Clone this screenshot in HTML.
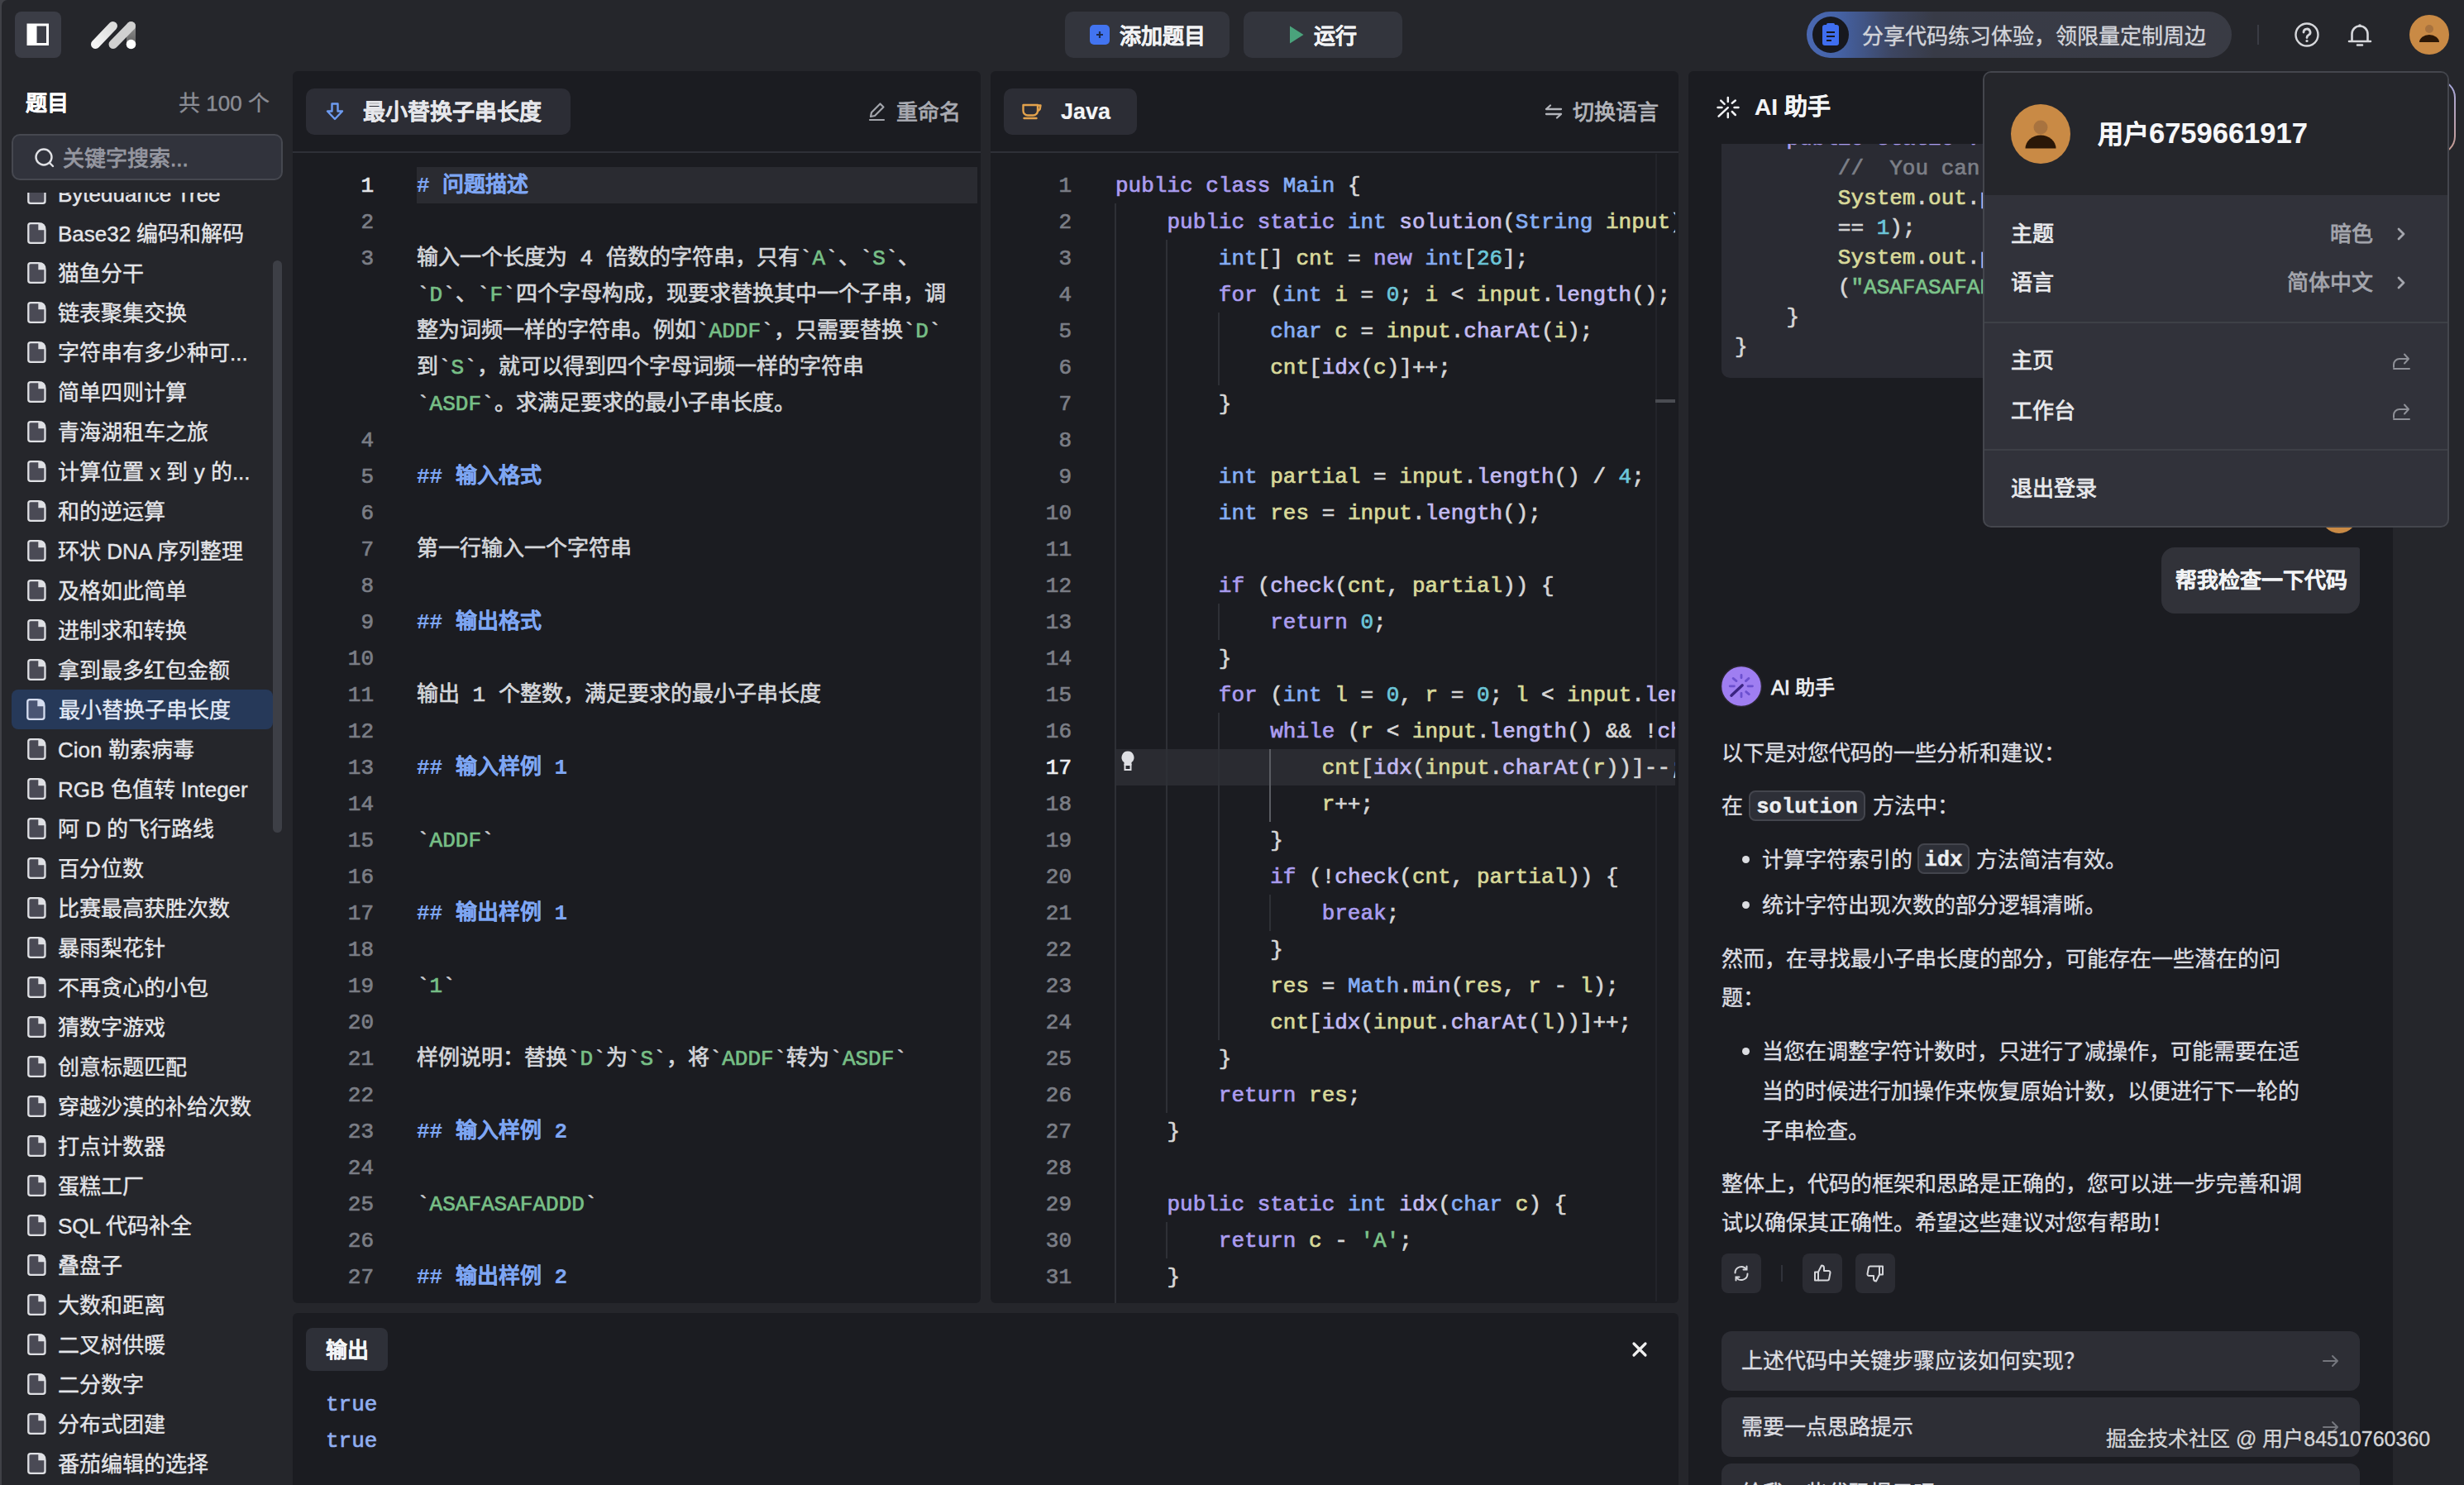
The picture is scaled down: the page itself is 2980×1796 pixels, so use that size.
<!DOCTYPE html>
<html lang="zh-CN">
<head>
<meta charset="utf-8">
<style>
*{box-sizing:border-box;margin:0;padding:0}
html,body{width:2980px;height:1796px;overflow:hidden;background:#25262b}
body{font-family:"Liberation Sans",sans-serif;color:#e2e3e7;position:relative;-webkit-text-stroke:0.4px currentColor}
.abs{position:absolute}
[style*="font-weight:bold"]{-webkit-text-stroke:0.15px currentColor}
.med{-webkit-text-stroke:0.8px currentColor !important;font-weight:normal !important}
.mono{font-family:"Liberation Mono",monospace}
.btn{position:absolute;background:#33353d;border-radius:10px}
.panel{position:absolute;background:#1b1c21;border-radius:6px;overflow:hidden}
/* sidebar */
#list{position:absolute;left:0;top:233px;width:330px;height:1563px;overflow:hidden}
#list .inner{position:absolute;left:0;top:-23px;width:330px}
.it{position:relative;height:48px;font-size:26px;line-height:50px;color:#e4e5e9;padding-left:70px;white-space:nowrap}
.it svg{position:absolute;left:33px;top:10px}
.it.sel{color:#e2e9f6;background:#263959;border-radius:8px;margin:0 0 0 14px;padding-left:57px;width:316px}
.it.sel svg{left:18px}
.it.sel svg path:first-child{fill:#4a5573;stroke:#d5ddf0}.it.sel svg path:last-child{fill:#d5ddf0}
/* editor */
.hdr{position:absolute;left:0;top:0;width:100%;height:99px;border-bottom:2px solid #2e3037}
.tab{position:absolute;top:21px;height:56px;background:#2c2d35;border-radius:10px}
.ln{position:absolute;width:100%;height:44px;line-height:46px;font-size:26px;white-space:pre;-webkit-text-stroke:0.7px currentColor}
.num{position:absolute;text-align:right;font-family:"Liberation Mono",monospace;color:#7b7e86}
.md{font-family:"Liberation Mono",monospace;color:#d4d6da}
.cj{font-family:"Liberation Sans",sans-serif}
.h{color:#7ea6f3;font-weight:bold;-webkit-text-stroke:0.1px currentColor}
.g{color:#77bf86}
.bt{color:#c9cacd}
/* code colors */
.k{color:#ab9df0}
.t{color:#86aef5}
.v{color:#d8d99a}
.f{color:#c3baf2}
.n{color:#6cc6d9}
.p{color:#d6d6d6}
.s{color:#7cc38a}
.cm{color:#7c7f87}

.aitx{position:absolute;left:40px;font-size:26px;line-height:48px;color:#dcdde1;white-space:nowrap}
.chip{position:absolute;height:37px;background:#2d2f37;border:2px solid #43454d;border-radius:8px;font-family:"Liberation Mono",monospace;font-weight:bold;font-size:25.5px;line-height:37px;text-align:center;color:#eceef1}
.dot{position:absolute;left:65px;width:9px;height:9px;border-radius:5px;background:#dcdde1;margin-top:22px}
.abtn{position:absolute;width:48px;height:48px;background:#2b2c33;border-radius:8px}
.sug{position:absolute;left:40px;width:772px;height:72px;background:#2d2e35;border-radius:12px;font-size:26px;line-height:72px;padding-left:24px;color:#dcdde1;white-space:nowrap}
.dd{position:absolute;font-size:26px;line-height:42px;white-space:nowrap}
</style>
</head>
<body>
<!-- left window border -->
<div class="abs" style="left:0;top:0;width:2px;height:1796px;background:#404147"></div>
<div class="abs" style="left:0;top:0;width:10px;height:10px;background:#404147"></div>
<div class="abs" style="left:2px;top:0;width:10px;height:12px;background:#25262b;border-top-left-radius:7px"></div>

<!-- ===== TOP BAR ===== -->
<div class="btn" style="left:18px;top:14px;width:56px;height:56px;background:#3b3d46;border-radius:8px"></div>
<svg class="abs" style="left:32px;top:28px" width="28" height="28" viewBox="0 0 28 28">
  <rect x="2" y="2" width="23.5" height="23.5" fill="none" stroke="#fff" stroke-width="3" stroke-linejoin="miter"/>
  <rect x="1" y="1" width="11.5" height="26" fill="#fff"/>
</svg>
<svg class="abs" style="left:104px;top:20px" width="66" height="46" viewBox="0 0 66 46">
  <defs>
    <linearGradient id="lg1" x1="0" y1="1" x2="1" y2="0"><stop offset="0" stop-color="#f4f4f4"/><stop offset="1" stop-color="#dcdcdc"/></linearGradient>
    <linearGradient id="lg2" gradientUnits="userSpaceOnUse" x1="0" y1="6" x2="0" y2="39"><stop offset="0" stop-color="#9a9a9a"/><stop offset="1" stop-color="#555"/></linearGradient>
  </defs>
  <line x1="54.5" y1="11.5" x2="54.5" y2="33.5" stroke="url(#lg2)" stroke-width="11" stroke-linecap="round"/>
  <line x1="11.5" y1="33.5" x2="32.5" y2="11.5" stroke="url(#lg1)" stroke-width="11" stroke-linecap="round"/>
  <line x1="33" y1="33.5" x2="54.5" y2="11.5" stroke="#d0d0d0" stroke-width="11" stroke-linecap="round"/>
  <circle cx="54.5" cy="33.5" r="5.8" fill="#fff"/>
</svg>

<div class="btn" style="left:1288px;top:14px;width:199px;height:56px"></div>
<div class="abs" style="left:1318px;top:30px;width:24px;height:24px;background:#4274f0;border-radius:5px"></div>
<svg class="abs" style="left:1318px;top:30px" width="24" height="24"><path d="M12 8v8M8 12h8" stroke="#1d2a4a" stroke-width="2.2"/></svg>
<div class="abs" style="left:1354px;top:22.5px;font-size:26px;line-height:42px;font-weight:bold;color:#f2f3f5">添加题目</div>

<div class="btn" style="left:1504px;top:14px;width:192px;height:56px"></div>
<svg class="abs" style="left:1558px;top:30px" width="20" height="24"><path d="M2 1.5L18.5 12L2 22.5Z" fill="#4aa37c"/></svg>
<div class="abs" style="left:1589px;top:22.5px;font-size:26px;line-height:42px;font-weight:bold;color:#f2f3f5">运行</div>

<!-- promo pill -->
<div class="abs" style="left:2185px;top:14px;width:514px;height:56px;border-radius:28px;background:linear-gradient(90deg,#4a68b2 0%,#4563a8 7%,#3d4662 20%,#383b47 30%,#393b44 100%)"></div>
<div class="abs" style="left:2192px;top:20px;width:44px;height:44px;border-radius:22px;background:#17181e"></div>
<svg class="abs" style="left:2201px;top:27px" width="26" height="30" viewBox="0 0 26 30">
  <rect x="3" y="3" width="20" height="25" rx="3" fill="#3f6ef0"/>
  <rect x="8" y="1" width="10" height="5" rx="1.5" fill="#3f6ef0"/>
  <path d="M8 12h10M8 17h10M8 22h6" stroke="#17181e" stroke-width="2.2"/>
</svg>
<div class="abs" style="left:2252px;top:23px;font-size:26px;line-height:42px;color:#d2d4da;white-space:nowrap">分享代码练习体验，领限量定制周边</div>
<div class="abs" style="left:2730px;top:30px;width:2px;height:24px;background:#3a3c44"></div>
<svg class="abs" style="left:2772px;top:24px" width="36" height="36" viewBox="0 0 36 36">
  <circle cx="18" cy="18" r="13.5" fill="none" stroke="#d6d7db" stroke-width="2.4"/>
  <path d="M14 15a4 4 0 1 1 5.8 3.6c-1.2.6-1.8 1.3-1.8 2.9" fill="none" stroke="#d6d7db" stroke-width="2.8" stroke-linecap="round"/>
  <circle cx="18" cy="25.5" r="1.6" fill="#d6d7db"/>
</svg>
<svg class="abs" style="left:2836px;top:24px" width="36" height="36" viewBox="0 0 36 36">
  <path d="M8.5 26V17a9.5 9.5 0 0 1 19 0v9M5 26h26M15 30.5h6" fill="none" stroke="#d6d7db" stroke-width="2.6" stroke-linecap="round"/><circle cx="18" cy="7" r="1.8" fill="#d6d7db"/>
</svg>
<svg class="abs" style="left:2914px;top:18px" width="48" height="48" viewBox="0 0 48 48">
  <circle cx="24" cy="24" r="24" fill="#c98a45"/>
  <circle cx="24" cy="17" r="5" fill="#a8733f"/>
  <path d="M12 33a12 9 0 0 1 24 0Z" fill="#2a1707"/>
</svg>

<!-- ===== SIDEBAR ===== -->
<div class="abs" style="left:31px;top:104px;font-size:26px;line-height:42px;font-weight:bold;color:#fff">题目</div>
<div class="abs" style="left:216px;top:104px;font-size:26px;line-height:42px;color:#8b8d95;white-space:nowrap">共 100 个</div>
<div class="abs" style="left:14px;top:162px;width:328px;height:56px;border-radius:10px;background:#31333c;border:2px solid #464850"></div>
<svg class="abs" style="left:40px;top:177px" width="28" height="28" viewBox="0 0 28 28"><circle cx="13" cy="13" r="9.5" fill="none" stroke="#e0e1e5" stroke-width="2.4"/><path d="M20 20l4 4" stroke="#e0e1e5" stroke-width="2.4" stroke-linecap="round"/></svg>
<div class="abs med" style="left:76px;top:171px;font-size:26px;line-height:42px;color:#9597a0;white-space:nowrap">关键字搜索...</div>

<div id="list"><div class="inner">
<div class="it"><svg width="24" height="28" viewBox="0 0 24 28"><path d="M3.9 2.2H13.6Q21.5 2.2 21.5 10V23.2A2.6 2.6 0 0 1 18.9 25.8H3.9A2.6 2.6 0 0 1 1.3 23.2V4.8A2.6 2.6 0 0 1 3.9 2.2Z" fill="#4a4a55" stroke="#dfe0e4" stroke-width="2.3"/><path d="M13.3 2.2H13.6Q21.5 2.2 21.5 10V10.3H13.3Z" fill="#dfe0e4"/></svg>Byteduance Tree</div>
<div class="it"><svg width="24" height="28" viewBox="0 0 24 28"><path d="M3.9 2.2H13.6Q21.5 2.2 21.5 10V23.2A2.6 2.6 0 0 1 18.9 25.8H3.9A2.6 2.6 0 0 1 1.3 23.2V4.8A2.6 2.6 0 0 1 3.9 2.2Z" fill="#4a4a55" stroke="#dfe0e4" stroke-width="2.3"/><path d="M13.3 2.2H13.6Q21.5 2.2 21.5 10V10.3H13.3Z" fill="#dfe0e4"/></svg>Base32 编码和解码</div>
<div class="it"><svg width="24" height="28" viewBox="0 0 24 28"><path d="M3.9 2.2H13.6Q21.5 2.2 21.5 10V23.2A2.6 2.6 0 0 1 18.9 25.8H3.9A2.6 2.6 0 0 1 1.3 23.2V4.8A2.6 2.6 0 0 1 3.9 2.2Z" fill="#4a4a55" stroke="#dfe0e4" stroke-width="2.3"/><path d="M13.3 2.2H13.6Q21.5 2.2 21.5 10V10.3H13.3Z" fill="#dfe0e4"/></svg>猫鱼分干</div>
<div class="it"><svg width="24" height="28" viewBox="0 0 24 28"><path d="M3.9 2.2H13.6Q21.5 2.2 21.5 10V23.2A2.6 2.6 0 0 1 18.9 25.8H3.9A2.6 2.6 0 0 1 1.3 23.2V4.8A2.6 2.6 0 0 1 3.9 2.2Z" fill="#4a4a55" stroke="#dfe0e4" stroke-width="2.3"/><path d="M13.3 2.2H13.6Q21.5 2.2 21.5 10V10.3H13.3Z" fill="#dfe0e4"/></svg>链表聚集交换</div>
<div class="it"><svg width="24" height="28" viewBox="0 0 24 28"><path d="M3.9 2.2H13.6Q21.5 2.2 21.5 10V23.2A2.6 2.6 0 0 1 18.9 25.8H3.9A2.6 2.6 0 0 1 1.3 23.2V4.8A2.6 2.6 0 0 1 3.9 2.2Z" fill="#4a4a55" stroke="#dfe0e4" stroke-width="2.3"/><path d="M13.3 2.2H13.6Q21.5 2.2 21.5 10V10.3H13.3Z" fill="#dfe0e4"/></svg>字符串有多少种可...</div>
<div class="it"><svg width="24" height="28" viewBox="0 0 24 28"><path d="M3.9 2.2H13.6Q21.5 2.2 21.5 10V23.2A2.6 2.6 0 0 1 18.9 25.8H3.9A2.6 2.6 0 0 1 1.3 23.2V4.8A2.6 2.6 0 0 1 3.9 2.2Z" fill="#4a4a55" stroke="#dfe0e4" stroke-width="2.3"/><path d="M13.3 2.2H13.6Q21.5 2.2 21.5 10V10.3H13.3Z" fill="#dfe0e4"/></svg>简单四则计算</div>
<div class="it"><svg width="24" height="28" viewBox="0 0 24 28"><path d="M3.9 2.2H13.6Q21.5 2.2 21.5 10V23.2A2.6 2.6 0 0 1 18.9 25.8H3.9A2.6 2.6 0 0 1 1.3 23.2V4.8A2.6 2.6 0 0 1 3.9 2.2Z" fill="#4a4a55" stroke="#dfe0e4" stroke-width="2.3"/><path d="M13.3 2.2H13.6Q21.5 2.2 21.5 10V10.3H13.3Z" fill="#dfe0e4"/></svg>青海湖租车之旅</div>
<div class="it"><svg width="24" height="28" viewBox="0 0 24 28"><path d="M3.9 2.2H13.6Q21.5 2.2 21.5 10V23.2A2.6 2.6 0 0 1 18.9 25.8H3.9A2.6 2.6 0 0 1 1.3 23.2V4.8A2.6 2.6 0 0 1 3.9 2.2Z" fill="#4a4a55" stroke="#dfe0e4" stroke-width="2.3"/><path d="M13.3 2.2H13.6Q21.5 2.2 21.5 10V10.3H13.3Z" fill="#dfe0e4"/></svg>计算位置 x 到 y 的...</div>
<div class="it"><svg width="24" height="28" viewBox="0 0 24 28"><path d="M3.9 2.2H13.6Q21.5 2.2 21.5 10V23.2A2.6 2.6 0 0 1 18.9 25.8H3.9A2.6 2.6 0 0 1 1.3 23.2V4.8A2.6 2.6 0 0 1 3.9 2.2Z" fill="#4a4a55" stroke="#dfe0e4" stroke-width="2.3"/><path d="M13.3 2.2H13.6Q21.5 2.2 21.5 10V10.3H13.3Z" fill="#dfe0e4"/></svg>和的逆运算</div>
<div class="it"><svg width="24" height="28" viewBox="0 0 24 28"><path d="M3.9 2.2H13.6Q21.5 2.2 21.5 10V23.2A2.6 2.6 0 0 1 18.9 25.8H3.9A2.6 2.6 0 0 1 1.3 23.2V4.8A2.6 2.6 0 0 1 3.9 2.2Z" fill="#4a4a55" stroke="#dfe0e4" stroke-width="2.3"/><path d="M13.3 2.2H13.6Q21.5 2.2 21.5 10V10.3H13.3Z" fill="#dfe0e4"/></svg>环状 DNA 序列整理</div>
<div class="it"><svg width="24" height="28" viewBox="0 0 24 28"><path d="M3.9 2.2H13.6Q21.5 2.2 21.5 10V23.2A2.6 2.6 0 0 1 18.9 25.8H3.9A2.6 2.6 0 0 1 1.3 23.2V4.8A2.6 2.6 0 0 1 3.9 2.2Z" fill="#4a4a55" stroke="#dfe0e4" stroke-width="2.3"/><path d="M13.3 2.2H13.6Q21.5 2.2 21.5 10V10.3H13.3Z" fill="#dfe0e4"/></svg>及格如此简单</div>
<div class="it"><svg width="24" height="28" viewBox="0 0 24 28"><path d="M3.9 2.2H13.6Q21.5 2.2 21.5 10V23.2A2.6 2.6 0 0 1 18.9 25.8H3.9A2.6 2.6 0 0 1 1.3 23.2V4.8A2.6 2.6 0 0 1 3.9 2.2Z" fill="#4a4a55" stroke="#dfe0e4" stroke-width="2.3"/><path d="M13.3 2.2H13.6Q21.5 2.2 21.5 10V10.3H13.3Z" fill="#dfe0e4"/></svg>进制求和转换</div>
<div class="it"><svg width="24" height="28" viewBox="0 0 24 28"><path d="M3.9 2.2H13.6Q21.5 2.2 21.5 10V23.2A2.6 2.6 0 0 1 18.9 25.8H3.9A2.6 2.6 0 0 1 1.3 23.2V4.8A2.6 2.6 0 0 1 3.9 2.2Z" fill="#4a4a55" stroke="#dfe0e4" stroke-width="2.3"/><path d="M13.3 2.2H13.6Q21.5 2.2 21.5 10V10.3H13.3Z" fill="#dfe0e4"/></svg>拿到最多红包金额</div>
<div class="it sel"><svg width="24" height="28" viewBox="0 0 24 28"><path d="M3.9 2.2H13.6Q21.5 2.2 21.5 10V23.2A2.6 2.6 0 0 1 18.9 25.8H3.9A2.6 2.6 0 0 1 1.3 23.2V4.8A2.6 2.6 0 0 1 3.9 2.2Z" fill="#4a4a55" stroke="#dfe0e4" stroke-width="2.3"/><path d="M13.3 2.2H13.6Q21.5 2.2 21.5 10V10.3H13.3Z" fill="#dfe0e4"/></svg>最小替换子串长度</div>
<div class="it"><svg width="24" height="28" viewBox="0 0 24 28"><path d="M3.9 2.2H13.6Q21.5 2.2 21.5 10V23.2A2.6 2.6 0 0 1 18.9 25.8H3.9A2.6 2.6 0 0 1 1.3 23.2V4.8A2.6 2.6 0 0 1 3.9 2.2Z" fill="#4a4a55" stroke="#dfe0e4" stroke-width="2.3"/><path d="M13.3 2.2H13.6Q21.5 2.2 21.5 10V10.3H13.3Z" fill="#dfe0e4"/></svg>Cion 勒索病毒</div>
<div class="it"><svg width="24" height="28" viewBox="0 0 24 28"><path d="M3.9 2.2H13.6Q21.5 2.2 21.5 10V23.2A2.6 2.6 0 0 1 18.9 25.8H3.9A2.6 2.6 0 0 1 1.3 23.2V4.8A2.6 2.6 0 0 1 3.9 2.2Z" fill="#4a4a55" stroke="#dfe0e4" stroke-width="2.3"/><path d="M13.3 2.2H13.6Q21.5 2.2 21.5 10V10.3H13.3Z" fill="#dfe0e4"/></svg>RGB 色值转 Integer</div>
<div class="it"><svg width="24" height="28" viewBox="0 0 24 28"><path d="M3.9 2.2H13.6Q21.5 2.2 21.5 10V23.2A2.6 2.6 0 0 1 18.9 25.8H3.9A2.6 2.6 0 0 1 1.3 23.2V4.8A2.6 2.6 0 0 1 3.9 2.2Z" fill="#4a4a55" stroke="#dfe0e4" stroke-width="2.3"/><path d="M13.3 2.2H13.6Q21.5 2.2 21.5 10V10.3H13.3Z" fill="#dfe0e4"/></svg>阿 D 的飞行路线</div>
<div class="it"><svg width="24" height="28" viewBox="0 0 24 28"><path d="M3.9 2.2H13.6Q21.5 2.2 21.5 10V23.2A2.6 2.6 0 0 1 18.9 25.8H3.9A2.6 2.6 0 0 1 1.3 23.2V4.8A2.6 2.6 0 0 1 3.9 2.2Z" fill="#4a4a55" stroke="#dfe0e4" stroke-width="2.3"/><path d="M13.3 2.2H13.6Q21.5 2.2 21.5 10V10.3H13.3Z" fill="#dfe0e4"/></svg>百分位数</div>
<div class="it"><svg width="24" height="28" viewBox="0 0 24 28"><path d="M3.9 2.2H13.6Q21.5 2.2 21.5 10V23.2A2.6 2.6 0 0 1 18.9 25.8H3.9A2.6 2.6 0 0 1 1.3 23.2V4.8A2.6 2.6 0 0 1 3.9 2.2Z" fill="#4a4a55" stroke="#dfe0e4" stroke-width="2.3"/><path d="M13.3 2.2H13.6Q21.5 2.2 21.5 10V10.3H13.3Z" fill="#dfe0e4"/></svg>比赛最高获胜次数</div>
<div class="it"><svg width="24" height="28" viewBox="0 0 24 28"><path d="M3.9 2.2H13.6Q21.5 2.2 21.5 10V23.2A2.6 2.6 0 0 1 18.9 25.8H3.9A2.6 2.6 0 0 1 1.3 23.2V4.8A2.6 2.6 0 0 1 3.9 2.2Z" fill="#4a4a55" stroke="#dfe0e4" stroke-width="2.3"/><path d="M13.3 2.2H13.6Q21.5 2.2 21.5 10V10.3H13.3Z" fill="#dfe0e4"/></svg>暴雨梨花针</div>
<div class="it"><svg width="24" height="28" viewBox="0 0 24 28"><path d="M3.9 2.2H13.6Q21.5 2.2 21.5 10V23.2A2.6 2.6 0 0 1 18.9 25.8H3.9A2.6 2.6 0 0 1 1.3 23.2V4.8A2.6 2.6 0 0 1 3.9 2.2Z" fill="#4a4a55" stroke="#dfe0e4" stroke-width="2.3"/><path d="M13.3 2.2H13.6Q21.5 2.2 21.5 10V10.3H13.3Z" fill="#dfe0e4"/></svg>不再贪心的小包</div>
<div class="it"><svg width="24" height="28" viewBox="0 0 24 28"><path d="M3.9 2.2H13.6Q21.5 2.2 21.5 10V23.2A2.6 2.6 0 0 1 18.9 25.8H3.9A2.6 2.6 0 0 1 1.3 23.2V4.8A2.6 2.6 0 0 1 3.9 2.2Z" fill="#4a4a55" stroke="#dfe0e4" stroke-width="2.3"/><path d="M13.3 2.2H13.6Q21.5 2.2 21.5 10V10.3H13.3Z" fill="#dfe0e4"/></svg>猜数字游戏</div>
<div class="it"><svg width="24" height="28" viewBox="0 0 24 28"><path d="M3.9 2.2H13.6Q21.5 2.2 21.5 10V23.2A2.6 2.6 0 0 1 18.9 25.8H3.9A2.6 2.6 0 0 1 1.3 23.2V4.8A2.6 2.6 0 0 1 3.9 2.2Z" fill="#4a4a55" stroke="#dfe0e4" stroke-width="2.3"/><path d="M13.3 2.2H13.6Q21.5 2.2 21.5 10V10.3H13.3Z" fill="#dfe0e4"/></svg>创意标题匹配</div>
<div class="it"><svg width="24" height="28" viewBox="0 0 24 28"><path d="M3.9 2.2H13.6Q21.5 2.2 21.5 10V23.2A2.6 2.6 0 0 1 18.9 25.8H3.9A2.6 2.6 0 0 1 1.3 23.2V4.8A2.6 2.6 0 0 1 3.9 2.2Z" fill="#4a4a55" stroke="#dfe0e4" stroke-width="2.3"/><path d="M13.3 2.2H13.6Q21.5 2.2 21.5 10V10.3H13.3Z" fill="#dfe0e4"/></svg>穿越沙漠的补给次数</div>
<div class="it"><svg width="24" height="28" viewBox="0 0 24 28"><path d="M3.9 2.2H13.6Q21.5 2.2 21.5 10V23.2A2.6 2.6 0 0 1 18.9 25.8H3.9A2.6 2.6 0 0 1 1.3 23.2V4.8A2.6 2.6 0 0 1 3.9 2.2Z" fill="#4a4a55" stroke="#dfe0e4" stroke-width="2.3"/><path d="M13.3 2.2H13.6Q21.5 2.2 21.5 10V10.3H13.3Z" fill="#dfe0e4"/></svg>打点计数器</div>
<div class="it"><svg width="24" height="28" viewBox="0 0 24 28"><path d="M3.9 2.2H13.6Q21.5 2.2 21.5 10V23.2A2.6 2.6 0 0 1 18.9 25.8H3.9A2.6 2.6 0 0 1 1.3 23.2V4.8A2.6 2.6 0 0 1 3.9 2.2Z" fill="#4a4a55" stroke="#dfe0e4" stroke-width="2.3"/><path d="M13.3 2.2H13.6Q21.5 2.2 21.5 10V10.3H13.3Z" fill="#dfe0e4"/></svg>蛋糕工厂</div>
<div class="it"><svg width="24" height="28" viewBox="0 0 24 28"><path d="M3.9 2.2H13.6Q21.5 2.2 21.5 10V23.2A2.6 2.6 0 0 1 18.9 25.8H3.9A2.6 2.6 0 0 1 1.3 23.2V4.8A2.6 2.6 0 0 1 3.9 2.2Z" fill="#4a4a55" stroke="#dfe0e4" stroke-width="2.3"/><path d="M13.3 2.2H13.6Q21.5 2.2 21.5 10V10.3H13.3Z" fill="#dfe0e4"/></svg>SQL 代码补全</div>
<div class="it"><svg width="24" height="28" viewBox="0 0 24 28"><path d="M3.9 2.2H13.6Q21.5 2.2 21.5 10V23.2A2.6 2.6 0 0 1 18.9 25.8H3.9A2.6 2.6 0 0 1 1.3 23.2V4.8A2.6 2.6 0 0 1 3.9 2.2Z" fill="#4a4a55" stroke="#dfe0e4" stroke-width="2.3"/><path d="M13.3 2.2H13.6Q21.5 2.2 21.5 10V10.3H13.3Z" fill="#dfe0e4"/></svg>叠盘子</div>
<div class="it"><svg width="24" height="28" viewBox="0 0 24 28"><path d="M3.9 2.2H13.6Q21.5 2.2 21.5 10V23.2A2.6 2.6 0 0 1 18.9 25.8H3.9A2.6 2.6 0 0 1 1.3 23.2V4.8A2.6 2.6 0 0 1 3.9 2.2Z" fill="#4a4a55" stroke="#dfe0e4" stroke-width="2.3"/><path d="M13.3 2.2H13.6Q21.5 2.2 21.5 10V10.3H13.3Z" fill="#dfe0e4"/></svg>大数和距离</div>
<div class="it"><svg width="24" height="28" viewBox="0 0 24 28"><path d="M3.9 2.2H13.6Q21.5 2.2 21.5 10V23.2A2.6 2.6 0 0 1 18.9 25.8H3.9A2.6 2.6 0 0 1 1.3 23.2V4.8A2.6 2.6 0 0 1 3.9 2.2Z" fill="#4a4a55" stroke="#dfe0e4" stroke-width="2.3"/><path d="M13.3 2.2H13.6Q21.5 2.2 21.5 10V10.3H13.3Z" fill="#dfe0e4"/></svg>二叉树供暖</div>
<div class="it"><svg width="24" height="28" viewBox="0 0 24 28"><path d="M3.9 2.2H13.6Q21.5 2.2 21.5 10V23.2A2.6 2.6 0 0 1 18.9 25.8H3.9A2.6 2.6 0 0 1 1.3 23.2V4.8A2.6 2.6 0 0 1 3.9 2.2Z" fill="#4a4a55" stroke="#dfe0e4" stroke-width="2.3"/><path d="M13.3 2.2H13.6Q21.5 2.2 21.5 10V10.3H13.3Z" fill="#dfe0e4"/></svg>二分数字</div>
<div class="it"><svg width="24" height="28" viewBox="0 0 24 28"><path d="M3.9 2.2H13.6Q21.5 2.2 21.5 10V23.2A2.6 2.6 0 0 1 18.9 25.8H3.9A2.6 2.6 0 0 1 1.3 23.2V4.8A2.6 2.6 0 0 1 3.9 2.2Z" fill="#4a4a55" stroke="#dfe0e4" stroke-width="2.3"/><path d="M13.3 2.2H13.6Q21.5 2.2 21.5 10V10.3H13.3Z" fill="#dfe0e4"/></svg>分布式团建</div>
<div class="it"><svg width="24" height="28" viewBox="0 0 24 28"><path d="M3.9 2.2H13.6Q21.5 2.2 21.5 10V23.2A2.6 2.6 0 0 1 18.9 25.8H3.9A2.6 2.6 0 0 1 1.3 23.2V4.8A2.6 2.6 0 0 1 3.9 2.2Z" fill="#4a4a55" stroke="#dfe0e4" stroke-width="2.3"/><path d="M13.3 2.2H13.6Q21.5 2.2 21.5 10V10.3H13.3Z" fill="#dfe0e4"/></svg>番茄编辑的选择</div>
<div class="it"><svg width="24" height="28" viewBox="0 0 24 28"><path d="M3.9 2.2H13.6Q21.5 2.2 21.5 10V23.2A2.6 2.6 0 0 1 18.9 25.8H3.9A2.6 2.6 0 0 1 1.3 23.2V4.8A2.6 2.6 0 0 1 3.9 2.2Z" fill="#4a4a55" stroke="#dfe0e4" stroke-width="2.3"/><path d="M13.3 2.2H13.6Q21.5 2.2 21.5 10V10.3H13.3Z" fill="#dfe0e4"/></svg>番茄的选择</div>
</div></div>
<div class="abs" style="left:330px;top:315px;width:11px;height:692px;border-radius:6px;background:#3d3f46"></div>

<!-- ===== MARKDOWN PANEL ===== -->
<div class="panel" style="left:354px;top:86px;width:832px;height:1490px">
  <div class="hdr"></div>
  <div class="tab" style="left:16px;width:320px"></div>
  <svg class="abs" style="left:38px;top:36px" width="26" height="26" viewBox="0 0 26 26"><path d="M9.5 3.5h7v9h5.5L13 22 4 12.5h5.5z" fill="none" stroke="#6d9bf0" stroke-width="2.4" stroke-linejoin="round"/></svg>
  <div class="abs" style="left:85px;top:28.5px;font-size:27px;line-height:42px;font-weight:bold;color:#e6e7eb;white-space:nowrap">最小替换子串长度</div>
  <svg class="abs" style="left:694px;top:36px" width="26" height="26" viewBox="0 0 26 26"><path d="M5 19l1-5L16.5 3.5l4 4L10 18z M4 23h17" fill="none" stroke="#a2a4ab" stroke-width="2.2" stroke-linejoin="round" stroke-linecap="round"/></svg>
  <div class="abs med" style="left:730px;top:29px;font-size:26px;line-height:42px;color:#a9abb2;white-space:nowrap">重命名</div>
  <div class="abs" style="left:150px;top:116px;width:678px;height:44px;background:#2a2b31"></div>
  <div class="ln num" style="top:116px;left:0;width:98px;color:#e6e7ea">1</div>
<div class="ln md" style="top:116px;left:150px;width:680px"><span class="h"># 问题描述</span></div>
<div class="ln num" style="top:160px;left:0;width:98px;color:#7b7e86">2</div>
<div class="ln md" style="top:160px;left:150px;width:680px"></div>
<div class="ln num" style="top:204px;left:0;width:98px;color:#7b7e86">3</div>
<div class="ln md" style="top:204px;left:150px;width:680px">输入一个长度为 4 倍数的字符串，只有<span class="bt">`</span><span class="g">A</span><span class="bt">`</span>、<span class="bt">`</span><span class="g">S</span><span class="bt">`</span>、</div>
<div class="ln md" style="top:248px;left:150px;width:680px"><span class="bt">`</span><span class="g">D</span><span class="bt">`</span>、<span class="bt">`</span><span class="g">F</span><span class="bt">`</span>四个字母构成，现要求替换其中一个子串，调</div>
<div class="ln md" style="top:292px;left:150px;width:680px">整为词频一样的字符串。例如<span class="bt">`</span><span class="g">ADDF</span><span class="bt">`</span>，只需要替换<span class="bt">`</span><span class="g">D</span><span class="bt">`</span></div>
<div class="ln md" style="top:336px;left:150px;width:680px">到<span class="bt">`</span><span class="g">S</span><span class="bt">`</span>，就可以得到四个字母词频一样的字符串</div>
<div class="ln md" style="top:380px;left:150px;width:680px"><span class="bt">`</span><span class="g">ASDF</span><span class="bt">`</span>。求满足要求的最小子串长度。</div>
<div class="ln num" style="top:424px;left:0;width:98px;color:#7b7e86">4</div>
<div class="ln md" style="top:424px;left:150px;width:680px"></div>
<div class="ln num" style="top:468px;left:0;width:98px;color:#7b7e86">5</div>
<div class="ln md" style="top:468px;left:150px;width:680px"><span class="h">## 输入格式</span></div>
<div class="ln num" style="top:512px;left:0;width:98px;color:#7b7e86">6</div>
<div class="ln md" style="top:512px;left:150px;width:680px"></div>
<div class="ln num" style="top:556px;left:0;width:98px;color:#7b7e86">7</div>
<div class="ln md" style="top:556px;left:150px;width:680px">第一行输入一个字符串</div>
<div class="ln num" style="top:600px;left:0;width:98px;color:#7b7e86">8</div>
<div class="ln md" style="top:600px;left:150px;width:680px"></div>
<div class="ln num" style="top:644px;left:0;width:98px;color:#7b7e86">9</div>
<div class="ln md" style="top:644px;left:150px;width:680px"><span class="h">## 输出格式</span></div>
<div class="ln num" style="top:688px;left:0;width:98px;color:#7b7e86">10</div>
<div class="ln md" style="top:688px;left:150px;width:680px"></div>
<div class="ln num" style="top:732px;left:0;width:98px;color:#7b7e86">11</div>
<div class="ln md" style="top:732px;left:150px;width:680px">输出 1 个整数，满足要求的最小子串长度</div>
<div class="ln num" style="top:776px;left:0;width:98px;color:#7b7e86">12</div>
<div class="ln md" style="top:776px;left:150px;width:680px"></div>
<div class="ln num" style="top:820px;left:0;width:98px;color:#7b7e86">13</div>
<div class="ln md" style="top:820px;left:150px;width:680px"><span class="h">## 输入样例 1</span></div>
<div class="ln num" style="top:864px;left:0;width:98px;color:#7b7e86">14</div>
<div class="ln md" style="top:864px;left:150px;width:680px"></div>
<div class="ln num" style="top:908px;left:0;width:98px;color:#7b7e86">15</div>
<div class="ln md" style="top:908px;left:150px;width:680px"><span class="bt">`</span><span class="g">ADDF</span><span class="bt">`</span></div>
<div class="ln num" style="top:952px;left:0;width:98px;color:#7b7e86">16</div>
<div class="ln md" style="top:952px;left:150px;width:680px"></div>
<div class="ln num" style="top:996px;left:0;width:98px;color:#7b7e86">17</div>
<div class="ln md" style="top:996px;left:150px;width:680px"><span class="h">## 输出样例 1</span></div>
<div class="ln num" style="top:1040px;left:0;width:98px;color:#7b7e86">18</div>
<div class="ln md" style="top:1040px;left:150px;width:680px"></div>
<div class="ln num" style="top:1084px;left:0;width:98px;color:#7b7e86">19</div>
<div class="ln md" style="top:1084px;left:150px;width:680px"><span class="bt">`</span><span class="g">1</span><span class="bt">`</span></div>
<div class="ln num" style="top:1128px;left:0;width:98px;color:#7b7e86">20</div>
<div class="ln md" style="top:1128px;left:150px;width:680px"></div>
<div class="ln num" style="top:1172px;left:0;width:98px;color:#7b7e86">21</div>
<div class="ln md" style="top:1172px;left:150px;width:680px">样例说明：替换<span class="bt">`</span><span class="g">D</span><span class="bt">`</span>为<span class="bt">`</span><span class="g">S</span><span class="bt">`</span>，将<span class="bt">`</span><span class="g">ADDF</span><span class="bt">`</span>转为<span class="bt">`</span><span class="g">ASDF</span><span class="bt">`</span></div>
<div class="ln num" style="top:1216px;left:0;width:98px;color:#7b7e86">22</div>
<div class="ln md" style="top:1216px;left:150px;width:680px"></div>
<div class="ln num" style="top:1260px;left:0;width:98px;color:#7b7e86">23</div>
<div class="ln md" style="top:1260px;left:150px;width:680px"><span class="h">## 输入样例 2</span></div>
<div class="ln num" style="top:1304px;left:0;width:98px;color:#7b7e86">24</div>
<div class="ln md" style="top:1304px;left:150px;width:680px"></div>
<div class="ln num" style="top:1348px;left:0;width:98px;color:#7b7e86">25</div>
<div class="ln md" style="top:1348px;left:150px;width:680px"><span class="bt">`</span><span class="g">ASAFASAFADDD</span><span class="bt">`</span></div>
<div class="ln num" style="top:1392px;left:0;width:98px;color:#7b7e86">26</div>
<div class="ln md" style="top:1392px;left:150px;width:680px"></div>
<div class="ln num" style="top:1436px;left:0;width:98px;color:#7b7e86">27</div>
<div class="ln md" style="top:1436px;left:150px;width:680px"><span class="h">## 输出样例 2</span></div>
<div class="ln num" style="top:1480px;left:0;width:98px;color:#7b7e86">28</div>
<div class="ln md" style="top:1480px;left:150px;width:680px"></div>
</div>

<!-- ===== CODE PANEL ===== -->
<div class="panel" style="left:1198px;top:86px;width:832px;height:1490px">
  <div class="hdr"></div>
  <div class="tab" style="left:16px;width:161px"></div>
  <svg class="abs" style="left:36px;top:36px" width="28" height="24" viewBox="0 0 28 24"><path d="M3.5 5h17.5v7a5.5 5.5 0 0 1-5.5 5.5h-6.5a5.5 5.5 0 0 1-5.5-5.5z M21 5.5h3.5l-0.8 4.5-2.7 2.5 M4.5 21h15" fill="none" stroke="#e3a24c" stroke-width="2.4" stroke-linecap="round" stroke-linejoin="round"/></svg>
  <div class="abs" style="left:85px;top:28px;font-size:27px;line-height:42px;font-weight:bold;color:#f4f5f7">Java</div>
  <svg class="abs" style="left:670px;top:38px" width="22" height="22" viewBox="0 0 22 22"><path d="M2 8h18M2 8l5-4.5 M20 14H2M20 14l-5 4.5" fill="none" stroke="#b3b5bb" stroke-width="2.3" stroke-linecap="round"/></svg>
  <div class="abs med" style="left:704px;top:29px;font-size:26px;line-height:42px;color:#b3b5bb;white-space:nowrap">切换语言</div>
  <div class="abs" style="left:804px;top:100px;width:2px;height:1388px;background:#23242a"></div>
  <div class="abs" style="left:804px;top:397px;width:24px;height:4px;background:#4a4c52"></div>
  <div class="abs" style="left:150px;top:820px;width:678px;height:44px;background:#2a2b31"></div>
  <svg class="abs" style="left:156px;top:820px" width="20" height="28" viewBox="0 0 20 28"><path d="M10 2.5a7.5 7.5 0 0 0-4.5 13.5v3.5h9V16A7.5 7.5 0 0 0 10 2.5z" fill="#dfe0e4"/><rect x="6.5" y="19" width="7" height="6" fill="none" stroke="#dfe0e4" stroke-width="2"/></svg>
  <div class="abs" style="left:150px;top:160px;width:2px;height:1330px;background:#2e3036"></div>
<div class="abs" style="left:212.4px;top:204px;width:2px;height:1056px;background:#2e3036"></div>
<div class="abs" style="left:212.4px;top:1392px;width:2px;height:44px;background:#2e3036"></div>
<div class="abs" style="left:274.8px;top:292px;width:2px;height:88px;background:#2e3036"></div>
<div class="abs" style="left:274.8px;top:644px;width:2px;height:44px;background:#2e3036"></div>
<div class="abs" style="left:274.8px;top:776px;width:2px;height:396px;background:#2e3036"></div>
<div class="abs" style="left:337.2px;top:820px;width:2px;height:88px;background:#5a5c62"></div>
<div class="abs" style="left:337.2px;top:996px;width:2px;height:44px;background:#2e3036"></div>
  <div class="ln num" style="top:116px;left:0;width:98px;color:#7b7e86">1</div>
<div class="ln num" style="top:160px;left:0;width:98px;color:#7b7e86">2</div>
<div class="ln num" style="top:204px;left:0;width:98px;color:#7b7e86">3</div>
<div class="ln num" style="top:248px;left:0;width:98px;color:#7b7e86">4</div>
<div class="ln num" style="top:292px;left:0;width:98px;color:#7b7e86">5</div>
<div class="ln num" style="top:336px;left:0;width:98px;color:#7b7e86">6</div>
<div class="ln num" style="top:380px;left:0;width:98px;color:#7b7e86">7</div>
<div class="ln num" style="top:424px;left:0;width:98px;color:#7b7e86">8</div>
<div class="ln num" style="top:468px;left:0;width:98px;color:#7b7e86">9</div>
<div class="ln num" style="top:512px;left:0;width:98px;color:#7b7e86">10</div>
<div class="ln num" style="top:556px;left:0;width:98px;color:#7b7e86">11</div>
<div class="ln num" style="top:600px;left:0;width:98px;color:#7b7e86">12</div>
<div class="ln num" style="top:644px;left:0;width:98px;color:#7b7e86">13</div>
<div class="ln num" style="top:688px;left:0;width:98px;color:#7b7e86">14</div>
<div class="ln num" style="top:732px;left:0;width:98px;color:#7b7e86">15</div>
<div class="ln num" style="top:776px;left:0;width:98px;color:#7b7e86">16</div>
<div class="ln num" style="top:820px;left:0;width:98px;color:#eeeff2">17</div>
<div class="ln num" style="top:864px;left:0;width:98px;color:#7b7e86">18</div>
<div class="ln num" style="top:908px;left:0;width:98px;color:#7b7e86">19</div>
<div class="ln num" style="top:952px;left:0;width:98px;color:#7b7e86">20</div>
<div class="ln num" style="top:996px;left:0;width:98px;color:#7b7e86">21</div>
<div class="ln num" style="top:1040px;left:0;width:98px;color:#7b7e86">22</div>
<div class="ln num" style="top:1084px;left:0;width:98px;color:#7b7e86">23</div>
<div class="ln num" style="top:1128px;left:0;width:98px;color:#7b7e86">24</div>
<div class="ln num" style="top:1172px;left:0;width:98px;color:#7b7e86">25</div>
<div class="ln num" style="top:1216px;left:0;width:98px;color:#7b7e86">26</div>
<div class="ln num" style="top:1260px;left:0;width:98px;color:#7b7e86">27</div>
<div class="ln num" style="top:1304px;left:0;width:98px;color:#7b7e86">28</div>
<div class="ln num" style="top:1348px;left:0;width:98px;color:#7b7e86">29</div>
<div class="ln num" style="top:1392px;left:0;width:98px;color:#7b7e86">30</div>
<div class="ln num" style="top:1436px;left:0;width:98px;color:#7b7e86">31</div>
<div class="ln num" style="top:1480px;left:0;width:98px;color:#7b7e86">32</div><div class="abs" style="left:150px;top:100px;width:678px;height:1388px;overflow:hidden"><div class="ln mono" style="top:16px;left:1px"><span class="k">public</span> <span class="k">class</span> <span class="t">Main</span> <span class="p">{</span></div>
<div class="ln mono" style="top:60px;left:1px">    <span class="k">public</span> <span class="k">static</span> <span class="t">int</span> <span class="f">solution</span><span class="p">(</span><span class="t">String</span> <span class="v">input</span><span class="p">)</span> <span class="p">{</span></div>
<div class="ln mono" style="top:104px;left:1px">        <span class="t">int</span><span class="p">[</span><span class="p">]</span> <span class="v">cnt</span> <span class="p">=</span> <span class="k">new</span> <span class="t">int</span><span class="p">[</span><span class="n">26</span><span class="p">]</span><span class="p">;</span></div>
<div class="ln mono" style="top:148px;left:1px">        <span class="k">for</span> <span class="p">(</span><span class="t">int</span> <span class="v">i</span> <span class="p">=</span> <span class="n">0</span><span class="p">;</span> <span class="v">i</span> <span class="p">&lt;</span> <span class="v">input</span><span class="p">.</span><span class="f">length</span><span class="p">(</span><span class="p">)</span><span class="p">;</span> <span class="v">i</span><span class="p">+</span><span class="p">+</span><span class="p">)</span> <span class="p">{</span></div>
<div class="ln mono" style="top:192px;left:1px">            <span class="t">char</span> <span class="v">c</span> <span class="p">=</span> <span class="v">input</span><span class="p">.</span><span class="f">charAt</span><span class="p">(</span><span class="v">i</span><span class="p">)</span><span class="p">;</span></div>
<div class="ln mono" style="top:236px;left:1px">            <span class="v">cnt</span><span class="p">[</span><span class="f">idx</span><span class="p">(</span><span class="v">c</span><span class="p">)</span><span class="p">]</span><span class="p">+</span><span class="p">+</span><span class="p">;</span></div>
<div class="ln mono" style="top:280px;left:1px">        <span class="p">}</span></div>
<div class="ln mono" style="top:324px;left:1px"></div>
<div class="ln mono" style="top:368px;left:1px">        <span class="t">int</span> <span class="v">partial</span> <span class="p">=</span> <span class="v">input</span><span class="p">.</span><span class="f">length</span><span class="p">(</span><span class="p">)</span> <span class="p">/</span> <span class="n">4</span><span class="p">;</span></div>
<div class="ln mono" style="top:412px;left:1px">        <span class="t">int</span> <span class="v">res</span> <span class="p">=</span> <span class="v">input</span><span class="p">.</span><span class="f">length</span><span class="p">(</span><span class="p">)</span><span class="p">;</span></div>
<div class="ln mono" style="top:456px;left:1px"></div>
<div class="ln mono" style="top:500px;left:1px">        <span class="k">if</span> <span class="p">(</span><span class="f">check</span><span class="p">(</span><span class="v">cnt</span><span class="p">,</span> <span class="v">partial</span><span class="p">)</span><span class="p">)</span> <span class="p">{</span></div>
<div class="ln mono" style="top:544px;left:1px">            <span class="k">return</span> <span class="n">0</span><span class="p">;</span></div>
<div class="ln mono" style="top:588px;left:1px">        <span class="p">}</span></div>
<div class="ln mono" style="top:632px;left:1px">        <span class="k">for</span> <span class="p">(</span><span class="t">int</span> <span class="v">l</span> <span class="p">=</span> <span class="n">0</span><span class="p">,</span> <span class="v">r</span> <span class="p">=</span> <span class="n">0</span><span class="p">;</span> <span class="v">l</span> <span class="p">&lt;</span> <span class="v">input</span><span class="p">.</span><span class="f">length</span><span class="p">(</span><span class="p">)</span><span class="p">;</span> <span class="v">l</span><span class="p">+</span><span class="p">+</span><span class="p">)</span> <span class="p">{</span></div>
<div class="ln mono" style="top:676px;left:1px">            <span class="k">while</span> <span class="p">(</span><span class="v">r</span> <span class="p">&lt;</span> <span class="v">input</span><span class="p">.</span><span class="f">length</span><span class="p">(</span><span class="p">)</span> <span class="p">&amp;</span><span class="p">&amp;</span> <span class="p">!</span><span class="f">check</span><span class="p">(</span><span class="v">cnt</span><span class="p">,</span> <span class="v">partial</span><span class="p">)</span><span class="p">)</span> <span class="p">{</span></div>
<div class="ln mono" style="top:720px;left:1px">                <span class="v">cnt</span><span class="p">[</span><span class="f">idx</span><span class="p">(</span><span class="v">input</span><span class="p">.</span><span class="f">charAt</span><span class="p">(</span><span class="v">r</span><span class="p">)</span><span class="p">)</span><span class="p">]</span><span class="p">-</span><span class="p">-</span><span class="p">;</span></div>
<div class="ln mono" style="top:764px;left:1px">                <span class="v">r</span><span class="p">+</span><span class="p">+</span><span class="p">;</span></div>
<div class="ln mono" style="top:808px;left:1px">            <span class="p">}</span></div>
<div class="ln mono" style="top:852px;left:1px">            <span class="k">if</span> <span class="p">(</span><span class="p">!</span><span class="f">check</span><span class="p">(</span><span class="v">cnt</span><span class="p">,</span> <span class="v">partial</span><span class="p">)</span><span class="p">)</span> <span class="p">{</span></div>
<div class="ln mono" style="top:896px;left:1px">                <span class="k">break</span><span class="p">;</span></div>
<div class="ln mono" style="top:940px;left:1px">            <span class="p">}</span></div>
<div class="ln mono" style="top:984px;left:1px">            <span class="v">res</span> <span class="p">=</span> <span class="t">Math</span><span class="p">.</span><span class="f">min</span><span class="p">(</span><span class="v">res</span><span class="p">,</span> <span class="v">r</span> <span class="p">-</span> <span class="v">l</span><span class="p">)</span><span class="p">;</span></div>
<div class="ln mono" style="top:1028px;left:1px">            <span class="v">cnt</span><span class="p">[</span><span class="f">idx</span><span class="p">(</span><span class="v">input</span><span class="p">.</span><span class="f">charAt</span><span class="p">(</span><span class="v">l</span><span class="p">)</span><span class="p">)</span><span class="p">]</span><span class="p">+</span><span class="p">+</span><span class="p">;</span></div>
<div class="ln mono" style="top:1072px;left:1px">        <span class="p">}</span></div>
<div class="ln mono" style="top:1116px;left:1px">        <span class="k">return</span> <span class="v">res</span><span class="p">;</span></div>
<div class="ln mono" style="top:1160px;left:1px">    <span class="p">}</span></div>
<div class="ln mono" style="top:1204px;left:1px"></div>
<div class="ln mono" style="top:1248px;left:1px">    <span class="k">public</span> <span class="k">static</span> <span class="t">int</span> <span class="f">idx</span><span class="p">(</span><span class="t">char</span> <span class="v">c</span><span class="p">)</span> <span class="p">{</span></div>
<div class="ln mono" style="top:1292px;left:1px">        <span class="k">return</span> <span class="v">c</span> <span class="p">-</span> <span class="s">&#x27;A&#x27;</span><span class="p">;</span></div>
<div class="ln mono" style="top:1336px;left:1px">    <span class="p">}</span></div>
<div class="ln mono" style="top:1380px;left:1px"><span class="p">}</span></div></div>
</div>

<!-- ===== OUTPUT PANEL ===== -->
<div class="panel" style="left:354px;top:1588px;width:1676px;height:240px">
  <div class="abs" style="left:16px;top:18px;width:99px;height:52px;background:#2e3038;border-radius:8px"></div>
  <div class="abs" style="left:40px;top:24px;font-size:26px;line-height:42px;font-weight:bold;color:#f4f5f7">输出</div>
  <div class="abs mono" style="left:40px;top:89px;font-size:26px;line-height:44px;color:#90aef0;white-space:pre;-webkit-text-stroke:0.7px currentColor">true
true</div>
  <svg class="abs" style="left:1617px;top:32px" width="24" height="24" viewBox="0 0 24 24"><path d="M5 5l14 14M19 5L5 19" stroke="#f0f0f0" stroke-width="3.2" stroke-linecap="round"/></svg>
</div>

<!-- ===== AI PANEL ===== -->
<div class="panel" style="left:2042px;top:86px;width:852px;height:1760px;border-radius:6px 6px 0 0">
    <svg class="abs" style="left:33px;top:30px" width="30" height="30" viewBox="0 0 30 30"><g stroke="#f2f3f5" stroke-width="2.5" stroke-linecap="round"><path d="M14.8 2v5M14.8 21v5M2.5 14h5M22.5 14h5M19.8 8.8l4-3.3M10.6 9.8l-4.4-4.2M19.8 19l4 4M3.6 24.6l11.2-10.4"/></g></svg>
  <div class="abs" style="left:80px;top:23px;font-size:28px;line-height:42px;font-weight:bold;color:#f4f5f7;white-space:nowrap">AI 助手</div>
  <div class="abs" style="left:0;top:88px;width:851px;height:1672px;overflow:hidden">
    <div class="abs" style="left:40px;top:-60px;width:772px;height:343px;background:#2a2b33;border-radius:10px"></div>
    <div class="abs mono" style="left:56px;top:-24px;height:36px;line-height:36px;font-size:26px;white-space:pre;-webkit-text-stroke:0.7px currentColor">    <span class="k">public</span> <span class="k">static</span> <span class="k">void</span> <span class="f">main</span><span class="p">(</span><span class="t">String</span><span class="p">[</span><span class="p">]</span> <span class="v">args</span><span class="p">)</span> <span class="p">{</span></div>
<div class="abs mono" style="left:56px;top:12px;height:36px;line-height:36px;font-size:26px;white-space:pre;-webkit-text-stroke:0.7px currentColor">        <span class="cm">//  You can add more test cases here</span></div>
<div class="abs mono" style="left:56px;top:48px;height:36px;line-height:36px;font-size:26px;white-space:pre;-webkit-text-stroke:0.7px currentColor">        <span class="v">System</span><span class="p">.</span><span class="v">out</span><span class="p">.</span><span class="f">println</span><span class="p">(</span><span class="f">solution</span><span class="p">(</span><span class="s">&quot;ADDF&quot;</span><span class="p">)</span></div>
<div class="abs mono" style="left:56px;top:84px;height:36px;line-height:36px;font-size:26px;white-space:pre;-webkit-text-stroke:0.7px currentColor">        <span class="p">=</span><span class="p">=</span> <span class="n">1</span><span class="p">)</span><span class="p">;</span></div>
<div class="abs mono" style="left:56px;top:120px;height:36px;line-height:36px;font-size:26px;white-space:pre;-webkit-text-stroke:0.7px currentColor">        <span class="v">System</span><span class="p">.</span><span class="v">out</span><span class="p">.</span><span class="f">println</span><span class="p">(</span><span class="v">solution</span></div>
<div class="abs mono" style="left:56px;top:156px;height:36px;line-height:36px;font-size:26px;white-space:pre;-webkit-text-stroke:0.7px currentColor">        <span class="p">(</span><span class="s">&quot;ASAFASAFADDD&quot;</span><span class="p">)</span> <span class="p">=</span><span class="p">=</span> <span class="n">2</span><span class="p">)</span><span class="p">;</span></div>
<div class="abs mono" style="left:56px;top:192px;height:36px;line-height:36px;font-size:26px;white-space:pre;-webkit-text-stroke:0.7px currentColor">    <span class="p">}</span></div>
<div class="abs mono" style="left:56px;top:228px;height:36px;line-height:36px;font-size:26px;white-space:pre;-webkit-text-stroke:0.7px currentColor"><span class="p">}</span></div>
    <div class="abs" style="left:763px;top:425px;width:48px;height:48px;border-radius:24px;background:#c98a45;border:2px solid #1b1c21"></div>
    <div class="abs" style="left:572px;top:488px;width:240px;height:80px;background:#313239;border-radius:16px 3px 16px 16px"></div>
    <div class="abs" style="left:589px;top:504px;font-size:26px;line-height:48px;font-weight:bold;color:#f2f3f5;white-space:nowrap">帮我检查一下代码</div>

    <svg class="abs" style="left:38px;top:630px" width="52" height="52" viewBox="0 0 52 52"><circle cx="26" cy="26" r="24.5" fill="#9f7ef1" stroke="#2b2633" stroke-width="1.5"/><g stroke="#6c50cf" stroke-width="2.8" stroke-linecap="round"><path d="M26 12.5v3.3M26 34.3v4.5M12.2 25.8h5.2M34 25.8h5.5M16.1 16.4l3.9 3.2M35 16.4l-3.6 3.2M31.7 32.6l3.6 3"/></g><path d="M13.9 37.2l13.3-12.4" stroke="#3b2482" stroke-width="3.4" stroke-linecap="round"/></svg>
    <div class="abs med" style="left:100px;top:636px;font-size:24px;line-height:44px;color:#eceef1;white-space:nowrap;-webkit-text-stroke:0.9px currentColor">AI 助手</div>

    <div class="aitx" style="top:713px">以下是对您代码的一些分析和建议：</div>
    <div class="chip" style="left:73px;top:782px;width:141px">solution</div>
    <div class="aitx" style="top:777px">在 <span style="display:inline-block;width:150px"></span>方法中：</div>
    <div class="dot" style="top:839px"></div>
    <div class="chip" style="left:277px;top:846px;width:63px">idx</div>
    <div class="aitx" style="top:842px;left:89px">计算字符索引的 <span style="display:inline-block;width:70px"></span>方法简洁有效。</div>
    <div class="dot" style="top:894px"></div>
    <div class="aitx" style="top:897px;left:89px">统计字符出现次数的部分逻辑清晰。</div>
    <div class="aitx" style="top:962px">然而，在寻找最小子串长度的部分，可能存在一些潜在的问</div>
    <div class="aitx" style="top:1009px">题：</div>
    <div class="dot" style="top:1071px"></div>
    <div class="aitx" style="top:1074px;left:89px">当您在调整字符计数时，只进行了减操作，可能需要在适</div>
    <div class="aitx" style="top:1122px;left:89px">当的时候进行加操作来恢复原始计数，以便进行下一轮的</div>
    <div class="aitx" style="top:1170px;left:89px">子串检查。</div>
    <div class="aitx" style="top:1234px">整体上，代码的框架和思路是正确的，您可以进一步完善和调</div>
    <div class="aitx" style="top:1281px">试以确保其正确性。希望这些建议对您有帮助！</div>

    <div class="abtn" style="left:40px;top:1342px"></div>
    <svg class="abs" style="left:52px;top:1354px" width="24" height="24" viewBox="0 0 24 24"><g fill="none" stroke="#d6d7db" stroke-width="2" stroke-linecap="round"><path d="M4.5 11.5a7.5 7.5 0 0 1 13.5-4.5M19.5 12.5a7.5 7.5 0 0 1-13.5 4.5"/><path d="M18.5 3.5v4h-4M5.5 20.5v-4h4"/></g></svg>
    <div class="abs" style="left:112px;top:1356px;width:2px;height:20px;background:#30323a"></div>
    <div class="abtn" style="left:138px;top:1342px"></div>
    <svg class="abs" style="left:150px;top:1354px" width="24" height="24" viewBox="0 0 24 24"><g fill="none" stroke="#d6d7db" stroke-width="2" stroke-linejoin="round"><path d="M3 10.5h4v10H3z"/><path d="M7 10.5l4-8c1.8 0 3 1.2 3 3V9h5.5a2 2 0 0 1 2 2.3l-1.4 7.4a2 2 0 0 1-2 1.8H7"/></g></svg>
    <div class="abtn" style="left:202px;top:1342px"></div>
    <svg class="abs" style="left:214px;top:1354px" width="24" height="24" viewBox="0 0 24 24"><g fill="none" stroke="#d6d7db" stroke-width="2" stroke-linejoin="round"><path d="M21 13.5h-4v-10h4z"/><path d="M17 13.5l-4 8c-1.8 0-3-1.2-3-3V15H4.5a2 2 0 0 1-2-2.3l1.4-7.4a2 2 0 0 1 2-1.8H17"/></g></svg>

    <div class="sug" style="top:1436px">上述代码中关键步骤应该如何实现？<svg class="abs" style="right:24px;top:25px" width="22" height="22" viewBox="0 0 22 22"><path d="M2 11h17M13 5l6 6-6 6" fill="none" stroke="#74767d" stroke-width="2" stroke-linecap="round" stroke-linejoin="round"/></svg></div>
    <div class="sug" style="top:1516px">需要一点思路提示<svg class="abs" style="right:24px;top:25px" width="22" height="22" viewBox="0 0 22 22"><path d="M2 11h17M13 5l6 6-6 6" fill="none" stroke="#74767d" stroke-width="2" stroke-linecap="round" stroke-linejoin="round"/></svg></div>
    <div class="sug" style="top:1596px">给我一些代码提示吧</div>
  </div>

</div>



<!-- floating gradient ring (behind dropdown) -->
<div class="abs" style="left:2870px;top:96px;width:100px;height:91px;border-radius:22px;border:2.5px solid transparent;background:linear-gradient(#25262b,#25262b) padding-box,linear-gradient(180deg,#a5a8e0,#c89b8e) border-box"></div>
<!-- ===== DROPDOWN ===== -->
<div class="abs" style="left:2398px;top:86px;width:564px;height:552px;background:#31323a;border:2px solid #44464d;border-radius:10px;overflow:hidden">
  <div class="abs" style="left:0;top:0;width:560px;height:148px;background:#25262b"></div>
  <svg class="abs" style="left:32px;top:38px" width="72" height="72" viewBox="0 0 72 72"><circle cx="36" cy="36" r="36" fill="#c98a45"/><circle cx="36" cy="28" r="8.5" fill="#a8733f"/><path d="M17.5 53.5a18.5 16 0 0 1 37 0Z" fill="#2a1707"/></svg>
  <div class="dd" style="left:137px;top:52px;font-size:31px;font-weight:bold;color:#f6f7f9">用户<span style="font-size:34.5px">6759661917</span></div>
  <div class="dd med" style="left:32px;top:174px;color:#e8e9ec">主题</div>
  <div class="dd med" style="left:376px;top:174px;width:94px;text-align:right;color:#a4a6ad">暗色</div>
  <svg class="abs" style="left:496px;top:186px" width="16" height="18" viewBox="0 0 16 18"><path d="M5 3l6 6-6 6" fill="none" stroke="#a4a6ad" stroke-width="2.8" stroke-linecap="round" stroke-linejoin="round"/></svg>
  <div class="dd med" style="left:32px;top:233px;color:#e8e9ec">语言</div>
  <div class="dd med" style="left:302px;top:233px;width:168px;text-align:right;color:#a4a6ad">简体中文</div>
  <svg class="abs" style="left:496px;top:245px" width="16" height="18" viewBox="0 0 16 18"><path d="M5 3l6 6-6 6" fill="none" stroke="#a4a6ad" stroke-width="2.8" stroke-linecap="round" stroke-linejoin="round"/></svg>
  <div class="abs" style="left:0;top:301px;width:560px;height:2px;background:#3e4047"></div>
  <div class="dd med" style="left:32px;top:327px;color:#e8e9ec">主页</div>
  <svg class="abs" style="left:492px;top:336px" width="26" height="26" viewBox="0 0 26 26"><path d="M3 22v-3a7 7 0 0 1 7-7h11M16 6.5l5 5.5-5 5.5" fill="none" stroke="#8e9097" stroke-width="2" stroke-linecap="round" stroke-linejoin="round" transform="translate(0,-2)"/><path d="M3 22h19" stroke="#8e9097" stroke-width="2" stroke-linecap="round"/></svg>
  <div class="dd med" style="left:32px;top:388px;color:#e8e9ec">工作台</div>
  <svg class="abs" style="left:492px;top:397px" width="26" height="26" viewBox="0 0 26 26"><path d="M3 22v-3a7 7 0 0 1 7-7h11M16 6.5l5 5.5-5 5.5" fill="none" stroke="#8e9097" stroke-width="2" stroke-linecap="round" stroke-linejoin="round" transform="translate(0,-2)"/><path d="M3 22h19" stroke="#8e9097" stroke-width="2" stroke-linecap="round"/></svg>
  <div class="abs" style="left:0;top:455px;width:560px;height:2px;background:#3e4047"></div>
  <div class="dd med" style="left:32px;top:482px;color:#e8e9ec">退出登录</div>
</div>
<!-- watermark -->
<div class="abs" style="left:2547px;top:1718.5px;font-size:25px;line-height:42px;color:#d2d3d6;white-space:nowrap;text-shadow:0 0 2px rgba(0,0,0,.6)">掘金技术社区 @ 用户84510760360</div>
</body>
</html>
